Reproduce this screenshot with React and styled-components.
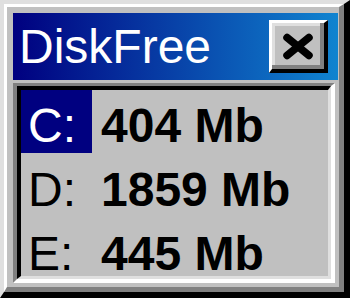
import React from 'react';
import styled, { createGlobalStyle } from 'styled-components';

const GlobalStyle = createGlobalStyle`
  html, body {
    margin: 0;
    padding: 0;
    background: #c0c0c0;
  }
  * {
    box-sizing: border-box;
  }
`;

const Window = styled.div`
  width: 350px;
  height: 298px;
  background: #c0c0c0;
  border-style: solid;
  border-width: 4px 6px 6px 4px;
  border-color: #dfdfdf #000 #000 #dfdfdf;
  font-family: "Liberation Sans", Arial, sans-serif;
`;

const Frame = styled.div`
  height: 100%;
  border-style: solid;
  border-width: 3px 5px 5px 3px;
  border-color: #fff #808080 #808080 #fff;
  padding: 6px 1px 4px 6px;
  display: flex;
  flex-direction: column;
  gap: 3px;
`;

const TitleBar = styled.div`
  height: 67px;
  flex: none;
  display: flex;
  align-items: center;
  justify-content: space-between;
  padding: 0 10px 0 6px;
  background: linear-gradient(90deg, #000080, #1084d0);
`;

const Title = styled.span`
  color: #fff;
  font-size: 48px;
  line-height: 67px;
  font-weight: normal;
`;

const CloseButton = styled.button`
  width: 59px;
  height: 53px;
  padding: 0;
  margin: 0;
  background: #c0c0c0;
  border-style: solid;
  border-width: 3px 4px 4px 3px;
  border-color: #fff #000 #000 #fff;
  box-shadow: inset -4px -4px #808080, inset 3px 3px #dfdfdf;
  display: flex;
  align-items: center;
  justify-content: center;
  cursor: default;
`;

const Panel = styled.div`
  flex: 1;
  margin-right: 3px;
  border-style: solid;
  border-width: 3px 4px 4px 4px;
  border-color: #808080 #fff #fff #808080;
  min-height: 0;
`;

const List = styled.div`
  height: 100%;
  border-style: solid;
  border-width: 4px 3px 3px 4px;
  border-color: #000 #dfdfdf #dfdfdf #000;
  overflow: hidden;
`;

const Row = styled.div`
  display: flex;
  height: 64px;
  font-size: 48px;
`;

const Drive = styled.div`
  width: 71px;
  height: 63px;
  padding: 8px 0 0 7px;
  line-height: 56px;
  font-weight: normal;
  background: ${({ $selected }) => ($selected ? '#000080' : 'transparent')};
  color: ${({ $selected }) => ($selected ? '#fff' : '#000')};
`;

const Free = styled.div`
  padding: 8px 0 0 9px;
  line-height: 56px;
  font-weight: bold;
  color: #000;
  white-space: nowrap;
`;

// chunky caption cross, as on the old close box
const CloseIcon = () => (
  <svg width="32" height="27" viewBox="0 0 32 27" aria-hidden="true">
    <g stroke="#000" strokeWidth="7.5" strokeLinecap="round">
      <line x1="5" y1="4.5" x2="27" y2="22.5" />
      <line x1="27" y1="4.5" x2="5" y2="22.5" />
    </g>
  </svg>
);

const drives = [
  { letter: 'C:', free: '404 Mb', selected: true },
  { letter: 'D:', free: '1859 Mb' },
  { letter: 'E:', free: '445 Mb' },
];

export default function App() {
  return (
    <>
      <GlobalStyle />
      <Window>
        <Frame>
          <TitleBar>
            <Title>DiskFree</Title>
            <CloseButton aria-label="Close">
              <CloseIcon />
            </CloseButton>
          </TitleBar>
          <Panel>
            <List>
              {drives.map((d) => (
                <Row key={d.letter}>
                  <Drive $selected={d.selected}>{d.letter}</Drive>
                  <Free>{d.free}</Free>
                </Row>
              ))}
            </List>
          </Panel>
        </Frame>
      </Window>
    </>
  );
}
